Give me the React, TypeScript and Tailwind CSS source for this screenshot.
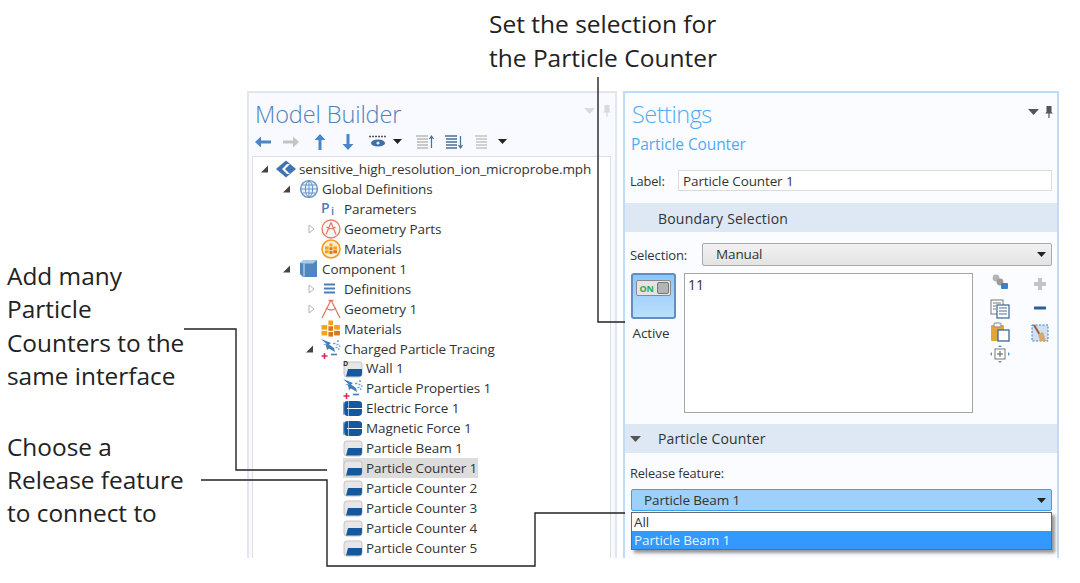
import type { ReactNode } from "react";

const Icon = ({ children, w = 20, h = 20 }: { children: ReactNode; w?: number; h?: number }) => (
  <svg width={w} height={h} viewBox={`0 0 ${w} ${h}`} className="shrink-0">
    {children}
  </svg>
);

// --- tree icons ---
const RootIcon = () => (
  <Icon>
    <path d="M0 10 L10 1.5 L20 10 L10 18.5 Z" fill="#3f74b0" />
    <path d="M11 5 L6 10 L11 15 L14 15 L9 10 L14 5 Z" fill="#fff" />
  </Icon>
);
const GlobeIcon = () => (
  <Icon>
    <circle cx="10" cy="10" r="8.4" fill="#eaf1f9" stroke="#5f90c6" strokeWidth="1.4" />
    <ellipse cx="10" cy="10" rx="3.6" ry="8" fill="none" stroke="#5f90c6" />
    <path d="M2 10H18M3.5 6H16.5M3.5 14H16.5M10 2V18" stroke="#5f90c6" strokeWidth="0.9" />
  </Icon>
);
const ParamIcon = () => (
  <Icon>
    <text x="0" y="14" fontSize="14" fontWeight="600" fill="#4a7ebb">P</text>
    <text x="10" y="16" fontSize="11" fontWeight="600" fill="#4a7ebb">i</text>
  </Icon>
);
const GeomPartsIcon = () => (
  <Icon>
    <circle cx="10" cy="10" r="9" fill="#fdf6f3" stroke="#df7b62" strokeWidth="1.3" />
    <path d="M10 3.5 L5 15.5 M10 3.5 L15 15.5 M5.5 8 Q10 11.5 14.5 8" fill="none" stroke="#df7b62" strokeWidth="1.2" />
  </Icon>
);
const MatGrid = () => (
  <g>
    <rect x="6" y="0" width="4" height="4" fill="#f4a21d" />
    <rect x="0" y="4" width="5" height="4" fill="#f4a21d" />
    <rect x="6" y="5" width="4" height="4" fill="#d9771a" />
    <rect x="11" y="4" width="5" height="4" fill="#f4a21d" />
    <rect x="0" y="9" width="5" height="4" fill="#f4a21d" />
    <rect x="6" y="10" width="4" height="4" fill="#d9771a" />
    <rect x="11" y="9" width="5" height="4" fill="#d9771a" />
  </g>
);
const MatCircleIcon = () => (
  <Icon>
    <circle cx="10" cy="10" r="9" fill="#fdeccd" stroke="#f09a23" strokeWidth="1.5" />
    <g transform="translate(4 4.5) scale(0.75)">
      <MatGrid />
    </g>
  </Icon>
);
const MatIcon = () => (
  <Icon>
    <g transform="translate(0.5 1.5) scale(1.15)">
      <MatGrid />
    </g>
  </Icon>
);
const CubeIcon = () => (
  <Icon>
    <path d="M1 4 L5 1 H18 V18 H4 L1 15 Z" fill="#4f86c0" />
    <path d="M1 4 L5 1 H18 L14 4.5 H5 Z" fill="#a9c9e8" />
    <path d="M5 4.5 V17.5" stroke="#d8e6f4" strokeWidth="1" />
  </Icon>
);
const DefsIcon = () => (
  <Icon>
    <path d="M3 5.5H14M3 9.5H14M3 13.5H14" stroke="#4a7ebb" strokeWidth="1.8" />
  </Icon>
);
const GeomIcon = () => (
  <Icon>
    <path d="M10 1 L1 19 M10 1 L19 19 M5 9 Q10 13 15 9 M7.5 1.5H12.5" fill="none" stroke="#df7b62" strokeWidth="1.3" />
  </Icon>
);
const ParticleIcon = () => (
  <Icon>
    <path d="M0 0 L10 4 L8 5.5 L13 9 L14 13 L8 9.5 L6 11 L5 6.5 L2 5 L6 5.5 Z" fill="#3f7dbd" />
    <path d="M12 4.5h2.5M16 2h2M15.5 5.5h2M18 7h1.5M14.5 8.5h2M17 10h1.5" stroke="#6d9fd3" strokeWidth="1.5" />
    <path d="M0.5 17H6.5M3.5 14V20" stroke="#e0245e" strokeWidth="1.5" />
    <path d="M10 15.5H16" stroke="#3f7dbd" strokeWidth="1.6" />
  </Icon>
);
const BoundaryIcon = ({ wall }: { wall?: boolean }) => (
  <Icon>
    <path d="M1 6 Q1 3 4 3 H17 Q19 3 19 6 V15 Q19 18 16 18 H4 Q1 18 1 15 Z" fill="#e6e6e6" stroke="#c4c4c4" />
    <path d="M5 10 H19 V14 Q19 17.5 16 17.5 H3 Z" fill="#14589f" />
    {wall && <text x="0" y="7" fontSize="7" fontWeight="700" fill="#333">D</text>}
  </Icon>
);
const ForceIcon = () => (
  <Icon>
    <path d="M1 6 Q1 3 5 3 H15 Q19 3 19 6 V14 Q19 18 15 18 H5 Q1 18 1 14 Z" fill="#14589f" />
    <path d="M1 4 Q0 10 1 17" fill="none" stroke="#6fa3d8" strokeWidth="1.4" />
    <path d="M4 10.5H19" stroke="#fff" strokeWidth="1" />
    <path d="M5.5 3V18" stroke="#bcd4ec" strokeWidth="0.8" />
  </Icon>
);

const Expander = ({ open }: { open?: boolean }) => (
  <svg width="9" height="10" viewBox="0 0 9 10" className="shrink-0">
    {open ? (
      <path d="M8 1.5 V8.5 H1 Z" fill="#444" />
    ) : (
      <path d="M2 1 L7 5 L2 9 Z" fill="#fff" stroke="#b5b5b5" />
    )}
  </svg>
);

type Node = { label: string; level: 0 | 1 | 2 | 3; icon: ReactNode; arrow?: "open" | "closed"; selected?: boolean };

const tree: Node[] = [
  { label: "sensitive_high_resolution_ion_microprobe.mph", level: 0, icon: <RootIcon />, arrow: "open" },
  { label: "Global Definitions", level: 1, icon: <GlobeIcon />, arrow: "open" },
  { label: "Parameters", level: 2, icon: <ParamIcon /> },
  { label: "Geometry Parts", level: 2, icon: <GeomPartsIcon />, arrow: "closed" },
  { label: "Materials", level: 2, icon: <MatCircleIcon /> },
  { label: "Component 1", level: 1, icon: <CubeIcon />, arrow: "open" },
  { label: "Definitions", level: 2, icon: <DefsIcon />, arrow: "closed" },
  { label: "Geometry 1", level: 2, icon: <GeomIcon />, arrow: "closed" },
  { label: "Materials", level: 2, icon: <MatIcon /> },
  { label: "Charged Particle Tracing", level: 2, icon: <ParticleIcon />, arrow: "open" },
  { label: "Wall 1", level: 3, icon: <BoundaryIcon wall /> },
  { label: "Particle Properties 1", level: 3, icon: <ParticleIcon /> },
  { label: "Electric Force 1", level: 3, icon: <ForceIcon /> },
  { label: "Magnetic Force 1", level: 3, icon: <ForceIcon /> },
  { label: "Particle Beam 1", level: 3, icon: <BoundaryIcon /> },
  { label: "Particle Counter 1", level: 3, icon: <BoundaryIcon />, selected: true },
  { label: "Particle Counter 2", level: 3, icon: <BoundaryIcon /> },
  { label: "Particle Counter 3", level: 3, icon: <BoundaryIcon /> },
  { label: "Particle Counter 4", level: 3, icon: <BoundaryIcon /> },
  { label: "Particle Counter 5", level: 3, icon: <BoundaryIcon /> },
];

const levelPad = ["pl-[23px]", "pl-[46px]", "pl-[68px]", "pl-[90px]"];

const TreeRow = ({ node }: { node: Node }) => (
  <div className={`relative flex h-[19.95px] items-center ${levelPad[node.level]}`}>
    {node.arrow && (
      <span
        className="absolute top-[5px]"
        style={{ left: node.arrow === "closed" ? 54 : [7, 29, 52, 0][node.level] }}
      >
        <Expander open={node.arrow === "open"} />
      </span>
    )}
    <div className={`flex h-[19.95px] shrink-0 items-center gap-[3px] pr-[1px] ${node.selected ? "bg-[#dcdcdc]" : ""}`}>
      {node.icon}
      <span className="whitespace-nowrap">{node.label}</span>
    </div>
  </div>
);

// --- toolbar ---
const Arrow = ({ color, rot }: { color: string; rot: number }) => (
  <svg width="18" height="18" viewBox="0 0 18 18" style={{ transform: `rotate(${rot}deg)` }} className="shrink-0">
    <path d="M1 9 L7 3.5 V7.5 H17 V10.5 H7 V14.5 Z" fill={color} />
  </svg>
);
const Caret = () => (
  <svg width="9" height="5" viewBox="0 0 9 5" className="shrink-0">
    <path d="M0 0H9L4.5 5Z" fill="#222" />
  </svg>
);
const ListBars = ({ arrow, color }: { arrow?: "up" | "down"; color: string }) => (
  <svg width="20" height="16" viewBox="0 0 20 16" className="shrink-0">
    <path d="M1 2H13M2 5H13M2 8H13M2 11H13M2 14H13" stroke={color} strokeWidth="1.5" />
    {arrow === "up" && <path d="M16.5 14V3M14.5 5L16.5 2L18.5 5" stroke="#4a6f99" strokeWidth="1.2" fill="none" />}
    {arrow === "down" && <path d="M16.5 2V13M14.5 11L16.5 14L18.5 11" stroke="#4a6f99" strokeWidth="1.2" fill="none" />}
  </svg>
);

const Toolbar = () => (
  <div className="flex h-[18px] items-center pl-[5px]">
    <Arrow color="#4a86c5" rot={0} />
    <span className="w-[10px]" />
    <Arrow color="#c4c4c4" rot={180} />
    <span className="w-[11px]" />
    <Arrow color="#4a86c5" rot={90} />
    <span className="w-[10px]" />
    <Arrow color="#4a86c5" rot={-90} />
    <span className="w-[11px]" />
    <svg width="20" height="14" viewBox="0 0 20 14" className="shrink-0">
      <path d="M1 1.5H19" stroke="#555" strokeWidth="1.4" strokeDasharray="2 1" />
      <ellipse cx="10" cy="8" rx="7" ry="3.6" fill="#3c6ea8" />
      <circle cx="10" cy="8" r="1.6" fill="#dfe9f5" />
    </svg>
    <span className="w-[5px]" />
    <Caret />
    <span className="w-[13px]" />
    <ListBars arrow="up" color="#b9b9b9" />
    <span className="w-[9px]" />
    <ListBars arrow="down" color="#4a6f99" />
    <span className="w-[10px]" />
    <ListBars color="#c4c4c4" />
    <span className="w-[4px]" />
    <Caret />
  </div>
);

const Pin = ({ color }: { color: string }) => (
  <svg width="8" height="12" viewBox="0 0 8 12" className="shrink-0">
    <path d="M1.5 0H6.5V6L8 7.5H4.6V12H3.4V7.5H0L1.5 6Z" fill={color} />
  </svg>
);
const MenuCaret = ({ color }: { color: string }) => (
  <svg width="11" height="6" viewBox="0 0 11 6" className="shrink-0">
    <path d="M0 0H11L5.5 6Z" fill={color} />
  </svg>
);

const ModelBuilder = () => (
  <section className="flex w-[370px] shrink-0 flex-col border-x-2 border-t-2 border-[#e3e6ec] bg-[#f8faff]">
    <div className="flex h-[40px] items-center justify-between pl-[6px] pr-[4px]">
      <h2 className="pt-[3px] text-[23.5px] font-light tracking-[-0.1px] text-[#4f82bd]">Model Builder</h2>
      <div className="flex items-center gap-[8px] pb-[4px]">
        <MenuCaret color="#d8dade" />
        <Pin color="#d8dade" />
      </div>
    </div>
    <Toolbar />
    <div className="ml-[3px] mr-[4px] mt-[5px] flex-1 border-x border-t border-[#dcdfe4] bg-white pt-[2.4px] text-[13.5px] tracking-[-0.08px] text-[#333]">
      {tree.map((node, i) => (
        <TreeRow key={i} node={node} />
      ))}
    </div>
  </section>
);

// --- settings side icons ---
const SideIcons = () => (
  <div className="flex gap-[20px] pl-[17px]">
    <div className="flex w-[20px] flex-col items-center">
      <svg width="18" height="18" viewBox="0 0 18 18">
        <circle cx="5" cy="5" r="3.4" fill="#b4b4b4" />
        <circle cx="9" cy="9" r="3.4" fill="#9c9c9c" />
        <rect x="10" y="10" width="7" height="6" rx="1" fill="#3f7fc4" />
      </svg>
      <svg width="20" height="20" viewBox="0 0 20 20" className="mt-[8px]">
        <rect x="1" y="1" width="12" height="14" fill="#fff" stroke="#777" />
        <path d="M3 4H11M3 7H6M3 10H6" stroke="#777" />
        <rect x="7" y="6" width="12" height="13" fill="#fff" stroke="#4a6f99" strokeWidth="1.3" />
        <path d="M9 9H17M9 12H17M9 15H17" stroke="#4a6f99" />
      </svg>
      <svg width="20" height="20" viewBox="0 0 20 20" className="mt-[3px]">
        <rect x="1" y="3" width="13" height="16" rx="1" fill="#e0a63c" />
        <rect x="4" y="1" width="7" height="4" rx="1" fill="#f4f4f4" stroke="#888" />
        <rect x="8" y="8" width="11" height="11" fill="#fff" stroke="#4a6f99" strokeWidth="1.4" />
      </svg>
      <svg width="20" height="18" viewBox="0 0 20 18" className="mt-[3px]">
        <rect x="5" y="4" width="10" height="10" fill="#fff" stroke="#777" />
        <path d="M10 6V12M7 9H13" stroke="#555" />
        <path d="M10 0L12 2H8ZM10 18L12 16H8ZM0 9L2 7V11ZM20 9L18 7V11Z" fill="#5c94cf" />
      </svg>
    </div>
    <div className="flex w-[20px] flex-col items-center gap-[8px] pt-[3px]">
      <svg width="16" height="16" viewBox="0 0 16 16">
        <path d="M6 2H10V6H14V10H10V14H6V10H2V6H6Z" fill="#c4c4c4" />
      </svg>
      <svg width="16" height="16" viewBox="0 0 16 16">
        <rect x="2" y="6.5" width="12" height="3" fill="#2f5f93" />
      </svg>
      <svg width="18" height="18" viewBox="0 0 18 18">
        <rect x="1" y="1" width="16" height="16" fill="#cfe0f2" stroke="#3f7fc4" strokeDasharray="2 1.5" />
        <path d="M3 1L9 11" stroke="#9a5a3a" strokeWidth="2" />
        <path d="M7 10L12 8L15 17H9Z" fill="#d7a86e" />
      </svg>
    </div>
  </div>
);

const Settings = () => (
  <section className="flex w-[436px] shrink-0 flex-col border-x-2 border-t-2 border-[#bcdcf7] bg-[#fafcff] text-[13.5px] tracking-[-0.12px] text-[#333]">
    <div className="h-[77px] pl-[7px] pr-[4px]">
      <div className="flex h-[42px] items-center justify-between">
        <h2 className="pt-[1px] text-[23.5px] font-light tracking-[-0.5px] text-[#4fabf5]">Settings</h2>
        <div className="flex items-center gap-[6px] pb-[4px]">
          <MenuCaret color="#555" />
          <Pin color="#555" />
        </div>
      </div>
      <div className="mt-[-2px] ml-[-1px] text-[15.5px] tracking-[-0.1px] text-[#4fabf5]">Particle Counter</div>
    </div>
    <div className="flex h-[21px] items-center pl-[5px] pr-[5px]">
      <span className="w-[48px] shrink-0 pt-[2px] text-[12.8px]">Label:</span>
      <div className="flex h-[21px] flex-1 items-center border border-[#dcdcdc] bg-white pl-[4px] pt-[1px]">Particle Counter 1</div>
    </div>
    <div className="mt-[12px] flex h-[29px] items-center bg-[#dde8f4] pl-[33px] pt-[1px] text-[14px] font-medium tracking-[0.2px]">
      Boundary Selection
    </div>
    <div className="mt-[11px] flex h-[23px] items-center pl-[5px] pr-[5px]">
      <span className="w-[72px] shrink-0 pt-[3px] text-[13px]">Selection:</span>
      <div className="flex h-[23px] flex-1 items-center justify-between rounded-[2px] border border-[#a9a9a9] bg-gradient-to-b from-[#f2f2f2] to-[#e3e3e3] pl-[13px] pr-[5px]">
        <span>Manual</span>
        <Caret />
      </div>
    </div>
    <div className="mt-[7px] flex h-[140px] pl-[5px]">
      <div className="flex w-[46px] shrink-0 flex-col items-center">
        <div className="flex h-[46px] w-[45px] justify-center rounded-[3px] border-2 border-[#5f8fc4] bg-gradient-to-b from-[#8cc6f7] to-[#bcdffc] pt-[5px]">
          <div className="flex h-[16px] w-[35px] items-center justify-between rounded-[2px] border border-[#8a8a8a] bg-[#e4e4e4] pl-[3px] pr-[1px]">
            <span className="text-[9px] font-bold leading-none text-[#2fa84f]">ON</span>
            <span className="h-[12px] w-[12px] rounded-[2px] border border-[#777] bg-[#b4b4b4]" />
          </div>
        </div>
        <span className="mr-[4px] mt-[4px] text-[13.5px]">Active</span>
      </div>
      <div className="ml-[8px] h-[140px] w-[289px] shrink-0 border border-[#a6a6a6] bg-white pl-[3px] pt-[1px] text-[14px] leading-[20px]">11</div>
      <SideIcons />
    </div>
    <div className="mt-[11px] flex h-[29px] items-center bg-[#dde8f4] pl-[5px] text-[14px] font-medium tracking-[0.15px]">
      <span className="w-[28px]">
        <MenuCaret color="#555" />
      </span>
      Particle Counter
    </div>
    <div className="mt-[10px] h-[20px] pl-[5px] text-[12.8px] leading-[20px]">Release feature:</div>
    <div className="relative ml-[6px] mr-[5px] mt-[6px]">
      <div className="flex h-[22px] items-center justify-between rounded-[2px] border border-[#3ba0e8] bg-[#9dd0fa] pl-[12px] pr-[5px]">
        <span>Particle Beam 1</span>
        <Caret />
      </div>
      <div className="absolute left-0 right-0 top-[23px] border border-[#6a6a6a] bg-white shadow-[3px_3px_3px_rgba(0,0,0,0.4)]">
        <div className="flex h-[18px] items-center pl-[2px]">All</div>
        <div className="flex h-[18px] items-center bg-[#3399ff] pl-[2px] text-[#e6f2ff]">Particle Beam 1</div>
      </div>
    </div>
  </section>
);

const Leaders = () => (
  <svg width="1080" height="583" viewBox="0 0 1080 583" className="pointer-events-none absolute left-0 top-0">
    <g fill="none" stroke="#222" strokeWidth="1.4">
      <path d="M598 77V322H625" />
      <path d="M184 329H236V470H327" />
      <path d="M201 480H327V566H535V513H625" />
    </g>
  </svg>
);

export default function App() {
  return (
    <div className="relative flex h-[583px] w-[1080px] overflow-hidden bg-white font-['Open_Sans',sans-serif] text-[#222]">
      <div className="w-[247px] shrink-0 pl-[7px] pt-[259px] text-[24.4px] leading-[33.4px]">
        <p>
          Add many
          <br />
          Particle
          <br />
          Counters to the
          <br />
          same interface
        </p>
        <p className="mt-[37px]">
          Choose a
          <br />
          Release feature
          <br />
          to connect to
        </p>
      </div>
      <div className="flex flex-col">
        <div className="h-[91px] pl-[242px] pt-[7px] text-[24.5px] leading-[34px]">
          Set the selection for
          <br />
          the Particle Counter
        </div>
        <div className="flex h-[467px] gap-[6px]">
          <ModelBuilder />
          <Settings />
        </div>
      </div>
      <Leaders />
    </div>
  );
}
